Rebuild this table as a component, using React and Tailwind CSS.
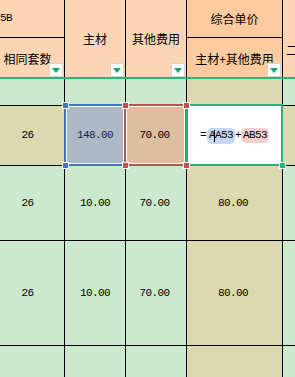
import React from "react";

const Filter = () => (
  <div className="absolute right-[1px] bottom-[0px] w-[14px] h-[14px] bg-white border border-[#d4d4d4] flex items-center justify-center">
    <svg width="8" height="5" viewBox="0 0 8 5">
      <polygon points="0,0 8,0 4,5" fill="#21a366" />
    </svg>
  </div>
);

const Corner = ({ cls, color }) => (
  <div className={`absolute w-[7px] h-[7px] border border-white z-30 ${cls} ${color}`} />
);

const Num = ({ children, cls = "" }) => (
  <span className={`font-['Liberation_Mono',monospace] text-[11px] tracking-[-0.6px] ${cls}`}>{children}</span>
);

function BodyRow({ h, first, c1, c2, c3, rowKhaki }) {
  const base = rowKhaki ? "bg-[#dcd8b0]" : "bg-[#cce8cf]";
  return (
    <div className={`flex ${h} border-b border-black shrink-0`}>
      <div className={`w-[65px] border-r border-black flex items-center justify-center pr-[9px] ${base}`}>
        {first && <Num>{first}</Num>}
      </div>
      <div className={`w-[61px] border-r border-black flex items-center justify-center ${base}`}>
        {c1 && <Num>{c1}</Num>}
      </div>
      <div className={`w-[61px] border-r border-black flex items-center justify-center pr-[3px] ${base}`}>
        {c2 && <Num>{c2}</Num>}
      </div>
      <div className="w-[96px] border-r border-black flex items-center justify-center pr-[3px] bg-[#dcd8b0]">
        {c3 && <Num>{c3}</Num>}
      </div>
      <div className={`flex-1 ${base}`} />
    </div>
  );
}

export default function App() {
  return (
    <div className="w-[295px] h-[377px] overflow-hidden bg-[#cce8cf] flex flex-col font-['Noto_Sans_CJK_SC',sans-serif] text-[12px] text-black leading-none">
      {/* Header */}
      <div className="flex h-[79px] shrink-0 border-b-2 border-[#2fb57a] bg-[#fcd5b4]">
        <div className="w-[65px] border-r border-black flex flex-col">
          <div className="h-[38px] border-b border-black flex items-center pl-[0px]">
            <Num>5B</Num>
          </div>
          <div className="flex-1 relative flex items-center justify-center pr-[9px] pt-[3px]">
            <span>相同套数</span>
            <Filter />
          </div>
        </div>
        <div className="w-[61px] border-r border-black relative flex items-center justify-center">
          <span>主材</span>
          <Filter />
        </div>
        <div className="w-[61px] border-r border-black relative flex items-center justify-center">
          <span>其他费用</span>
          <Filter />
        </div>
        <div className="w-[96px] border-r border-black flex flex-col bg-[#fbcb9f]">
          <div className="h-[38px] border-b border-black flex items-center justify-center">
            <span>综合单价</span>
          </div>
          <div className="flex-1 relative flex items-center justify-center pt-[3px]">
            <span>主材+其他费用</span>
            <Filter />
          </div>
        </div>
        <div className="flex-1 flex items-start pl-[3px] pt-[44px] overflow-hidden">
          <span>二</span>
        </div>
      </div>

      {/* Row 52 */}
      <BodyRow h="h-[27px]" />

      {/* Row 53 (selected) */}
      <div className="relative flex h-[60px] border-b border-black shrink-0">
        <div className="w-[65px] border-r border-black flex items-center justify-center pr-[9px] bg-[#dcd8b0]">
          <Num>26</Num>
        </div>
        <div className="w-[61px] border-r border-black flex items-center justify-center bg-[#adb9c4]">
          <Num cls="text-[#1c2541]">148.00</Num>
        </div>
        <div className="w-[61px] border-r border-black flex items-center justify-center pr-[3px] bg-[#dbbf9f]">
          <Num>70.00</Num>
        </div>
        <div className="w-[96px] border-r border-black flex items-center justify-center bg-white">
          <div className="flex items-center font-['Liberation_Mono',monospace] text-[11px] tracking-[-0.6px]">
            <span className="mr-[1px]">=</span>
            <span className="bg-[#c8d5f1] rounded-[5px] px-[2px] py-[2px] flex items-center">
              A<span className="inline-block w-px h-[12px] bg-black -mx-[0.5px]" />A53
            </span>
            <span>+</span>
            <span className="bg-[#f3cfcf] rounded-[5px] px-[2px] py-[2px]">AB53</span>
          </div>
        </div>
        <div className="flex-1 bg-[#dcd8b0]" />

        {/* selection overlays */}
        <div className="absolute left-[64px] top-[-2px] w-[62px] h-[62px] border-2 border-[#4472c4] z-10">
          <div className="absolute inset-0 border border-white" />
        </div>
        <div className="absolute left-[124px] top-[-2px] w-[63px] h-[62px] border-2 border-[#c0504d] z-10">
          <div className="absolute inset-0 border border-white" />
        </div>
        <div className="absolute left-[186px] top-[-2px] w-[97px] h-[62px] border-2 border-[#21b77a] z-20" />

        <Corner cls="left-[62px] top-[-4px]" color="bg-[#4472c4]" />
        <Corner cls="left-[62px] top-[56px]" color="bg-[#4472c4]" />
        <Corner cls="left-[122px] top-[-4px]" color="bg-[#c0504d]" />
        <Corner cls="left-[122px] top-[56px]" color="bg-[#c0504d]" />
        <Corner cls="left-[183px] top-[-4px]" color="bg-[#c0504d]" />
        <Corner cls="left-[183px] top-[56px]" color="bg-[#c0504d]" />
        <Corner cls="left-[279px] top-[56px] w-[6px] h-[6px]" color="bg-[#21b77a]" />
      </div>

      {/* Row 54 */}
      <BodyRow h="h-[75px]" first="26" c1="10.00" c2="70.00" c3="80.00" />
      {/* Row 55 */}
      <BodyRow h="h-[105px]" first="26" c1="10.00" c2="70.00" c3="80.00" />
      {/* Row 56 */}
      <BodyRow h="h-[60px]" />
    </div>
  );
}
